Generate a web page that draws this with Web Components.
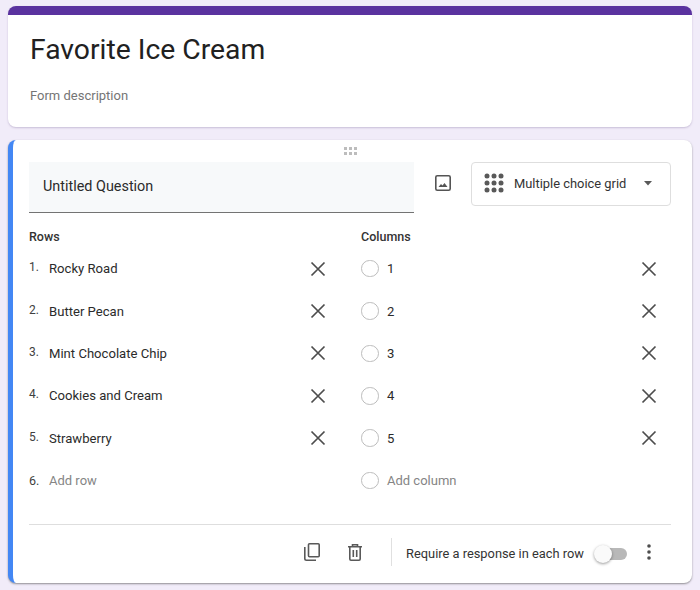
<!DOCTYPE html>
<html>
<head>
<meta charset="utf-8">
<style>
  html, body { margin: 0; padding: 0; }
  body {
    background: hsl(263, 50%, 95%);
    font-family: Roboto, "Liberation Sans", sans-serif;
    padding: 6px 8px 0;
    height: 584px;
    overflow: hidden;
  }
</style>
</head>
<body>
<form-header title-text="Favorite Ice Cream" description="Form description"></form-header>
<question-card>
  <option-row slot="rows" marker="1." text="Rocky Road"></option-row>
  <option-row slot="rows" marker="2." text="Butter Pecan"></option-row>
  <option-row slot="rows" marker="3." text="Mint Chocolate Chip"></option-row>
  <option-row slot="rows" marker="4." text="Cookies and Cream"></option-row>
  <option-row slot="rows" marker="5." text="Strawberry"></option-row>
  <option-row slot="rows" marker="6." text="Add row" add></option-row>
  <option-row slot="columns" radio text="1"></option-row>
  <option-row slot="columns" radio text="2"></option-row>
  <option-row slot="columns" radio text="3"></option-row>
  <option-row slot="columns" radio text="4"></option-row>
  <option-row slot="columns" radio text="5"></option-row>
  <option-row slot="columns" radio text="Add column" add></option-row>
</question-card>

<script>
class FormHeader extends HTMLElement {
  constructor () {
    super()
    this.shadow = this.attachShadow({ mode: 'open' })
  }

  connectedCallback () {
    this.shadow.innerHTML = /*html*/`
    <style>
      :host {
        background: #fff;
        border-radius: 8px;
        border-top: 9px solid hsl(262, 52%, 41%);
        box-shadow: 0 1px 2px hsla(263, 20%, 50%, 0.35);
        box-sizing: border-box;
        display: block;
        height: 121px;
        padding: 16px 22px 0;
      }
      h1 {
        color: hsl(0, 0%, 13%);
        font-size: 28.3px;
        font-weight: 400;
        line-height: 38px;
        margin: 0;
      }
      p {
        color: hsl(0, 0%, 46%);
        font-size: 13px;
        line-height: 18px;
        margin: 18px 0 0;
      }
    </style>
    <h1>${this.getAttribute('title-text')}</h1>
    <p>${this.getAttribute('description')}</p>
    `
  }
}
customElements.define('form-header', FormHeader)

class OptionRow extends HTMLElement {
  constructor () {
    super()
    this.shadow = this.attachShadow({ mode: 'open' })
  }

  connectedCallback () {
    const isAdd = this.hasAttribute('add')
    const lead = this.hasAttribute('radio')
      ? '<span class="radio"></span>'
      : `<span class="marker">${this.getAttribute('marker')}</span>`
    const close = isAdd ? '' : `
      <svg class="close" viewBox="0 0 16 16" width="16" height="16">
        <path d="M1.5 1.5 14.5 14.5M14.5 1.5 1.5 14.5" fill="none" stroke="hsl(0, 0%, 30%)" stroke-width="1.7"/>
      </svg>`
    this.shadow.innerHTML = /*html*/`
    <style>
      :host {
        align-items: center;
        display: flex;
        height: 42.4px;
      }
      .marker {
        color: hsl(0, 0%, 25%);
        font-size: 12px;
        margin-top: -3px;
        width: 20px;
      }
      :host([add]) .marker { margin-top: 0; font-size: 12.5px; }
      .radio {
        border: 1.5px solid hsl(0, 0%, 74%);
        border-radius: 50%;
        box-sizing: border-box;
        height: 17.5px;
        margin-right: 8.5px;
        width: 17.5px;
      }
      .text {
        color: hsl(0, 0%, 17%);
        flex: 1;
        font-size: 13.1px;
      }
      :host([add]) .text { color: hsl(0, 0%, 52%); font-size: 13px; }
      .close { flex: none; }
    </style>
    ${lead}
    <span class="text">${this.getAttribute('text')}</span>
    ${close}
    `
  }
}
customElements.define('option-row', OptionRow)

class TypeSelect extends HTMLElement {
  constructor () {
    super()
    this.shadow = this.attachShadow({ mode: 'open' })
  }

  connectedCallback () {
    this.shadow.innerHTML = /*html*/`
    <style>
      :host {
        align-items: center;
        border: 1px solid hsl(0, 0%, 87%);
        border-radius: 4px;
        box-sizing: border-box;
        display: flex;
        height: 44px;
        padding: 0 17px 2px 12px;
        width: 200px;
      }
      svg { flex: none; }
      span {
        color: hsl(0, 0%, 20%);
        flex: 1;
        font-size: 12.9px;
        margin-left: 10px;
      }
    </style>
    <svg width="20" height="20" viewBox="0 0 20 20" fill="hsl(0, 0%, 35%)">
      <circle cx="3" cy="3" r="2.5"/><circle cx="10" cy="3" r="2.5"/><circle cx="17" cy="3" r="2.5"/>
      <circle cx="3" cy="10" r="2.5"/><circle cx="10" cy="10" r="2.5"/><circle cx="17" cy="10" r="2.5"/>
      <circle cx="3" cy="17" r="2.5"/><circle cx="10" cy="17" r="2.5"/><circle cx="17" cy="17" r="2.5"/>
    </svg>
    <span>Multiple choice grid</span>
    <svg width="10" height="5" viewBox="0 0 10 5"><path d="M1 0H9L5 4.5Z" fill="hsl(0, 0%, 35%)"/></svg>
    `
  }
}
customElements.define('type-select', TypeSelect)

class QuestionFooter extends HTMLElement {
  constructor () {
    super()
    this.shadow = this.attachShadow({ mode: 'open' })
  }

  connectedCallback () {
    this.shadow.innerHTML = /*html*/`
    <style>
      :host {
        align-items: center;
        border-top: 1px solid hsl(0, 0%, 87%);
        box-sizing: border-box;
        display: flex;
        height: 59px;
        justify-content: flex-end;
        padding: 0 20px 3px 0;
      }
      svg { flex: none; }
      .copy { margin-right: 28px; }
      .sep {
        background: hsl(0, 0%, 88%);
        height: 28px;
        margin: 0 14px 0 29px;
        width: 1px;
      }
      .label {
        color: hsl(0, 0%, 20%);
        font-size: 12.85px;
        margin: 2px 10px 0 0;
      }
      .toggle {
        height: 18px;
        margin: 3px 20px 0 0;
        position: relative;
        width: 33px;
      }
      .toggle::before {
        background: hsl(0, 0%, 72%);
        border-radius: 6px;
        content: "";
        height: 12px;
        left: 4px;
        position: absolute;
        right: 0;
        top: 3px;
      }
      .toggle::after {
        background: hsl(0, 0%, 98%);
        border-radius: 50%;
        box-shadow: 0 1px 3px hsla(0, 0%, 0%, 0.4);
        content: "";
        height: 18px;
        left: 0;
        position: absolute;
        top: 0;
        width: 18px;
      }
    </style>
    <svg class="copy" width="16" height="18" viewBox="0 0 16 18" fill="none" stroke="hsl(0, 0%, 35%)" stroke-width="1.6">
      <rect x="4.5" y="0.8" width="10.7" height="13" rx="1"/>
      <path d="M0.8 4V15.5Q0.8 17.2 2.5 17.2H12"/>
    </svg>
    <svg width="14" height="17" viewBox="0 0 14 17" fill="none" stroke="hsl(0, 0%, 35%)" stroke-width="1.6">
      <path d="M0 2.8H14M4.5 2.5V0.8H9.5V2.5"/>
      <path d="M1.8 3V15Q1.8 16.2 3 16.2H11Q12.2 16.2 12.2 15V3"/>
      <path d="M5.3 6V13M8.7 6V13"/>
    </svg>
    <span class="sep"></span>
    <span class="label">Require a response in each row</span>
    <span class="toggle"></span>
    <svg width="4" height="16" viewBox="0 0 4 16" fill="hsl(0, 0%, 30%)">
      <circle cx="2" cy="2" r="1.8"/><circle cx="2" cy="8" r="1.8"/><circle cx="2" cy="14" r="1.8"/>
    </svg>
    `
  }
}
customElements.define('question-footer', QuestionFooter)

class QuestionCard extends HTMLElement {
  constructor () {
    super()
    this.shadow = this.attachShadow({ mode: 'open' })
  }

  connectedCallback () {
    this.shadow.innerHTML = /*html*/`
    <style>
      :host {
        background: #fff;
        border-left: 5px solid hsl(217, 89%, 61%);
        border-radius: 8px;
        box-shadow: 0 1px 2px hsla(0, 0%, 25%, 0.55);
        box-sizing: border-box;
        display: block;
        height: 443px;
        margin-top: 13px;
        padding: 0 21px 0 16px;
        position: relative;
      }
      .drag {
        display: block;
        left: 331px;
        position: absolute;
        top: 7px;
      }
      .top {
        display: flex;
        padding-top: 22px;
      }
      .title {
        align-items: center;
        background: hsl(210, 25%, 97.5%);
        border-bottom: 1px solid hsl(0, 0%, 45%);
        box-sizing: border-box;
        color: hsl(0, 0%, 17%);
        display: flex;
        font-size: 14.4px;
        height: 51px;
        padding: 0 14px 2px;
        width: 385px;
      }
      .image {
        flex: none;
        margin: 13px 20px 0 21px;
      }
      .grid {
        display: grid;
        grid-template-columns: 332px 1fr;
        margin-top: 16px;
      }
      h2 {
        color: hsl(0, 0%, 20%);
        font-size: 12.5px;
        font-weight: 500;
        line-height: 16px;
        margin: 0 0 2.45px;
      }
      .col { display: flex; flex-direction: column; }
      .col.left { padding-right: 35px; }
      .col.right { padding-right: 14px; }
      question-footer { margin-top: 22.15px; }
    </style>
    <svg class="drag" width="14" height="8" viewBox="0 0 14 8" fill="hsl(0, 0%, 74%)">
      <rect x="0" y="0" width="3" height="3"/><rect x="5" y="0" width="3" height="3"/><rect x="10" y="0" width="3" height="3"/>
      <rect x="0" y="5" width="3" height="3"/><rect x="5" y="5" width="3" height="3"/><rect x="10" y="5" width="3" height="3"/>
    </svg>
    <div class="top">
      <div class="title">Untitled Question</div>
      <svg class="image" width="16" height="16" viewBox="0 0 16 16" fill="none">
        <rect x="0.8" y="0.8" width="14.4" height="14.4" rx="1.5" stroke="hsl(0, 0%, 33%)" stroke-width="1.6"/>
        <path d="M3.5 12 6 9 7.5 10.5 9.5 8 12.5 12Z" fill="hsl(0, 0%, 33%)"/>
      </svg>
      <type-select></type-select>
    </div>
    <div class="grid">
      <div class="col left"><h2>Rows</h2><slot name="rows"></slot></div>
      <div class="col right"><h2>Columns</h2><slot name="columns"></slot></div>
    </div>
    <question-footer></question-footer>
    `
  }
}
customElements.define('question-card', QuestionCard)
</script>
</body>
</html>
